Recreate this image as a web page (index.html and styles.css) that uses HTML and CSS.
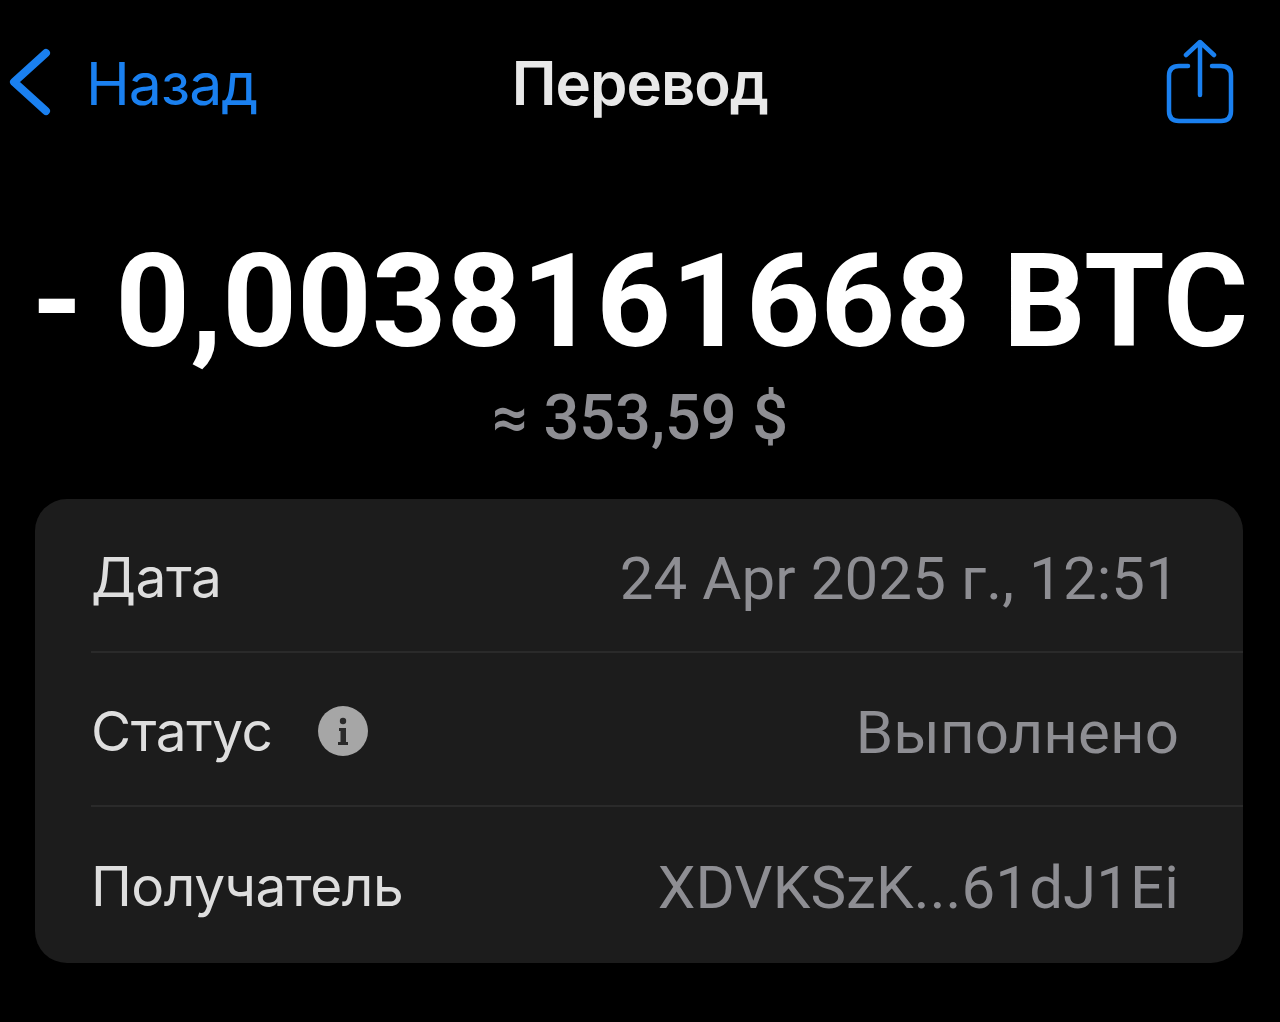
FILE: index.html
```html
<!DOCTYPE html>
<html lang="ru">
<head>
  <meta charset="UTF-8">
  <title>Перевод</title>
  <link rel="stylesheet" href="styles.css">
</head>
<body>

  <div class="topbar">
    <div class="back">
      <svg class="back-icon" width="48" height="70" viewBox="0 0 48 70">
        <path d="M38 5 L6 34 L38 63" fill="none" stroke="#1a80f0" stroke-width="8" stroke-linecap="round" stroke-linejoin="round"/>
      </svg>
      <span class="back-text">Назад</span>
    </div>
    <div class="title">Перевод</div>
    <div class="share-box">
      <svg class="share" width="70" height="88" viewBox="0 0 70 88">
        <path d="M23 27 H14 Q4 27 4 37 V72 Q4 82 14 82 H56 Q66 82 66 72 V37 Q66 27 56 27 H47" fill="none" stroke="#1a80f0" stroke-width="4.5" stroke-linecap="round"/>
        <path d="M35 56 V3 M21 16 L35 3 L49 16" fill="none" stroke="#1a80f0" stroke-width="4.5" stroke-linecap="round" stroke-linejoin="round"/>
      </svg>
    </div>
  </div>

  <div class="amount">- 0,0038161668 BTC</div>
  <div class="fiat">≈ 353,59 $</div>

  <div class="card">
    <div class="row">
      <div class="label">Дата</div>
      <div class="value">24 Apr 2025 г., 12:51</div>
    </div>
    <div class="row">
      <div class="label">Статус
        <svg class="info" width="50" height="50" viewBox="0 0 50 50">
          <circle cx="25" cy="25" r="25" fill="#a6a6a6"/>
          <circle cx="25" cy="15" r="3.2" fill="#2a2a2a"/>
          <path d="M21 22 H28 V36 H30 V39 H20 V36 H22.5 V25 H21 Z" fill="#2a2a2a"/>
        </svg>
      </div>
      <div class="value">Выполнено</div>
    </div>
    <div class="row">
      <div class="label">Получатель</div>
      <div class="value">XDVKSzK...61dJ1Ei</div>
    </div>
  </div>

</body>
</html>
```

FILE: styles.css
```css
html, body {
  margin: 0;
  padding: 0;
  background: #000;
  font-family: Roboto, "Liberation Sans", sans-serif;
}

body {
  height: 1022px;
  overflow: hidden;
}

.topbar {
  display: grid;
  grid-template-columns: 1fr auto 1fr;
  align-items: center;
  height: 88px;
  padding: 39px 45px 0;
}

.back {
  display: flex;
  align-items: center;
  gap: 30px;
  margin-left: -37px;
}

.back-text {
  font-family: Inter, Roboto, sans-serif;
  font-size: 59px;
  letter-spacing: -1px;
  color: #1a80f0;
}

.title {
  font-family: Inter, Roboto, sans-serif;
  font-size: 60px;
  font-weight: 600;
  letter-spacing: -1px;
  color: #e8e8e8;
}

.share-box {
  display: flex;
  justify-content: flex-end;
}

.amount {
  margin-top: 110px;
  text-align: center;
  font-size: 130.4px;
  line-height: 130px;
  font-weight: 700;
  color: #fff;
}

.fiat {
  margin-top: 16px;
  text-align: center;
  font-size: 63px;
  line-height: 70px;
  font-weight: 500;
  color: #8e8e93;
}

.card {
  margin: 46px 37px 0 35px;
  padding: 0 0 2px 56px;
  background: #1c1c1c;
  border-radius: 32px;
}

.row {
  box-sizing: border-box;
  display: flex;
  align-items: center;
  justify-content: space-between;
  height: 154px;
  padding-right: 64px;
  border-bottom: 2px solid #2a2a2a;
}

.row:last-child {
  border-bottom: none;
}

.label {
  display: flex;
  align-items: center;
  gap: 46px;
  padding-top: 3px;
  font-family: Inter, Roboto, sans-serif;
  font-size: 55px;
  letter-spacing: -0.5px;
  color: #dedede;
}

.value {
  padding-top: 6px;
  font-size: 60px;
  letter-spacing: 0.1px;
  color: #8e8e93;
}
```
